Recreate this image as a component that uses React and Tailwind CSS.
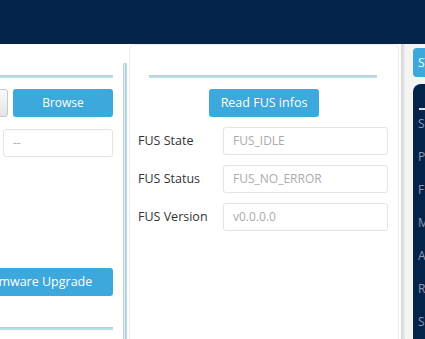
import React from 'react';

const fusRows = [
  { label: 'FUS State', value: 'FUS_IDLE' },
  { label: 'FUS Status', value: 'FUS_NO_ERROR' },
  { label: 'FUS Version', value: 'v0.0.0.0' },
];

const stlinkItems = ['Serial number', 'Port', 'Frequency (kHz)', 'Mode', 'Access port', 'Reset mode', 'Speed'];

function DoubleLine({ className }) {
  return (
    <div className={className}>
      <div className="h-px bg-[#c9c9c9]" />
      <div className="h-[2px] bg-[#b6dfeb]" />
    </div>
  );
}

function BlueButton({ children, className }) {
  return (
    <button className={`h-[28px] shrink-0 rounded-[3px] bg-[#3ca8dc] text-white ${className}`}>
      {children}
    </button>
  );
}

function Field({ value, className }) {
  return (
    <div
      className={`flex h-[28px] shrink-0 items-center rounded-[3px] border border-[#e3e3e3] bg-white pl-[9px] text-[12px] text-[#ababab] ${className}`}
    >
      {value}
    </div>
  );
}

export default function App() {
  return (
    <div className="flex h-[339px] w-[425px] flex-col overflow-hidden bg-white font-['Open_Sans',sans-serif]">
      <header className="h-[44px] shrink-0 bg-[#03234b]" />

      <div className="flex min-h-0 flex-1">
        {/* left panel, scrolled so only its right part shows */}
        <div className="flex w-[123px] shrink-0 flex-col pr-[10px]">
          <DoubleLine className="mt-[31px]" />
          <div className="mt-[11px] flex justify-end gap-[5px] overflow-hidden">
            <button className="h-[28px] w-[60px] shrink-0 rounded-[3px] border border-[#c9c9c9] bg-gradient-to-b from-[#fafafa] to-[#e4e4e4]" />
            <BlueButton className="w-[100px] text-[12px]">Browse</BlueButton>
          </div>
          <Field value="--" className="mt-[12px] w-[110px] self-end text-[#9a9a9a]" />
          <div className="mt-[111px] flex justify-end overflow-hidden">
            <BlueButton className="w-[150px] text-[12.5px]">Firmware Upgrade</BlueButton>
          </div>
          <DoubleLine className="mt-[31px]" />
        </div>

        {/* splitter */}
        <div className="mt-[19px] flex w-[6px] shrink-0">
          <div className="w-px bg-[#cdcdcd]" />
          <div className="w-px bg-[#e8e8e8]" />
          <div className="w-[2px] bg-[#acd9e7]" />
        </div>

        {/* FUS card */}
        <div className="flex w-[270px] shrink-0 flex-col rounded-t-[6px] border border-b-0 border-[#ebebeb]">
          <DoubleLine className="ml-[19px] mt-[30px] w-[228px]" />
          <BlueButton className="mt-[11px] w-[110px] self-center text-[12.5px]">Read FUS infos</BlueButton>
          <div className="mt-[10px] flex flex-col gap-[10px]">
            {fusRows.map((row) => (
              <div key={row.label} className="flex items-center">
                <span className="w-[93px] pl-[8px] text-[12.5px] text-[#333]">{row.label}</span>
                <Field value={row.value} className="w-[165px]" />
              </div>
            ))}
          </div>
        </div>

        {/* right side panel */}
        <div className="flex min-w-0 flex-1">
          <div className="w-[2px] shrink-0 bg-white" />
          <div className="w-[4px] shrink-0 bg-gradient-to-r from-[#d3d3d3] to-[#ececec]" />
          <div className="flex min-w-0 flex-1 flex-col bg-[#f4f4f4] pl-[8px]">
            <div className="mt-[4px] flex h-[29px] shrink-0 items-center whitespace-nowrap rounded-l-[4px] bg-[#3ca8dc] pl-[5px] text-[12px] text-white">
              ST-LINK
            </div>
            <div className="mt-[7px] flex flex-1 flex-col rounded-tl-[8px] bg-[#03234b] pl-[5px]">
              <div className="ml-px mt-[24px] h-[2px] w-[60px] bg-[#dfe3ea]" />
              <ul className="-mt-[3px] flex flex-col">
                {stlinkItems.map((item) => (
                  <li key={item} className="flex h-[33px] items-center whitespace-nowrap text-[12px] text-[#8e9ab0]">
                    {item}
                  </li>
                ))}
              </ul>
            </div>
          </div>
        </div>
      </div>
    </div>
  );
}
